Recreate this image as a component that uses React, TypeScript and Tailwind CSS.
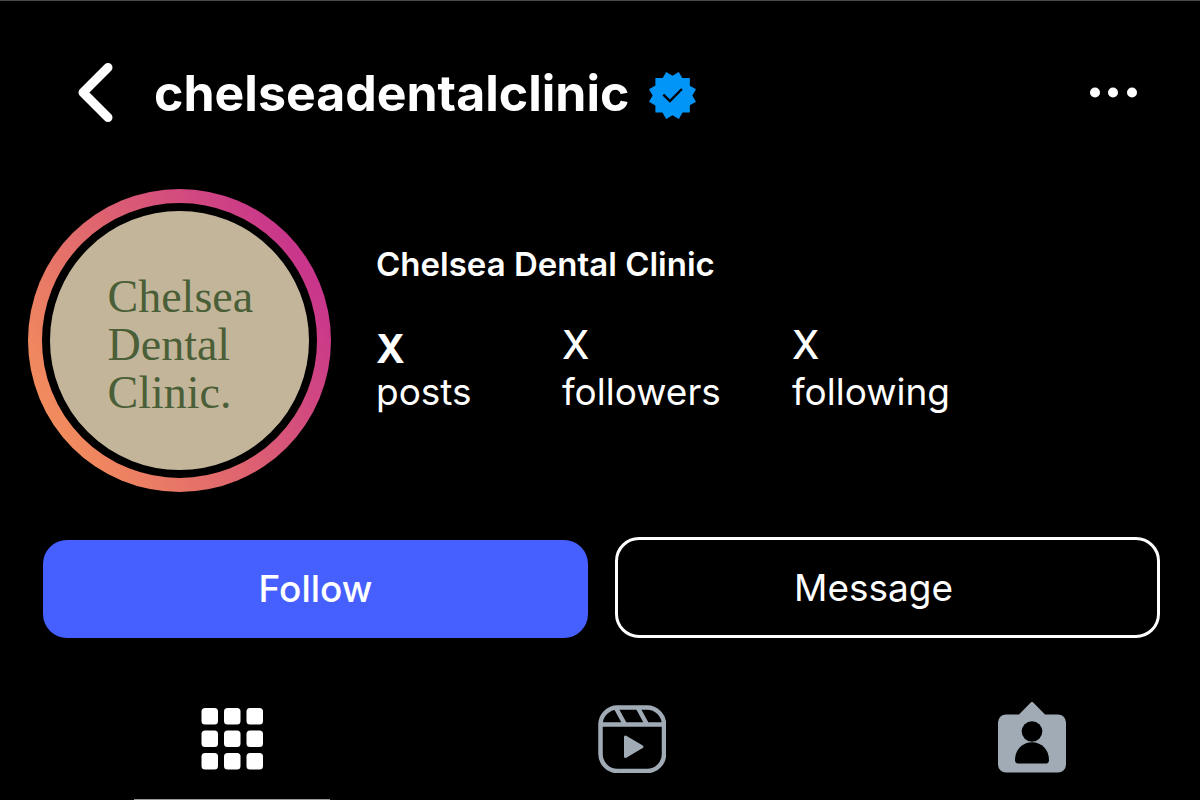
import React, { useState } from 'react';
import clsx from 'clsx';

interface Stat {
  label: string;
  value: string;
  valueClass: string;
}

type Tab = 'posts' | 'reels' | 'tagged';

const stats: Stat[] = [
  { label: 'posts', value: 'X', valueClass: 'font-bold pt-1' },
  { label: 'followers', value: 'X', valueClass: 'font-medium' },
  { label: 'following', value: 'X', valueClass: 'font-medium' },
];

const BackIcon: React.FC = () => (
  <svg viewBox="0 0 36 60" className="h-[60px] w-9" fill="none" stroke="currentColor" strokeWidth="9" strokeLinecap="round" strokeLinejoin="round" aria-hidden="true">
    <path d="M30 4.500 5 29.500l25 25" />
  </svg>
);

const VerifiedIcon: React.FC = () => (
  <svg viewBox="0 0 40 40" className="size-[47px]" role="img" aria-label="Verified">
    <path
      fill="#0095f6"
      d="M19.998 3.094 14.638 0l-2.972 5.15H5.432v6.354L0 14.64 3.094 20 0 25.359l5.432 3.137v5.905h5.975L14.638 40l5.36-3.094L25.358 40l3.232-5.6h6.162v-6.01L40 25.359 36.905 20 40 14.641l-5.248-3.03v-6.46h-6.419L25.358 0l-5.36 3.094Z"
    />
    <path d="m12.2 19.3 5.6 5.4 10.2-10.2" fill="none" stroke="#000" strokeWidth="2" />
  </svg>
);

const MoreIcon: React.FC = () => (
  <svg viewBox="0 0 48 12" className="h-3 w-12" fill="currentColor" aria-hidden="true">
    <circle cx="5" cy="5.5" r="5" />
    <circle cx="23" cy="5.5" r="5" />
    <circle cx="42" cy="5.5" r="5" />
  </svg>
);

const GridIcon: React.FC = () => (
  <svg viewBox="0 0 62 62" className="size-[62px]" fill="currentColor" aria-hidden="true">
    {[0, 22.5, 45].map(y =>
      [0.5, 23, 45.5].map(x => <rect key={`${x}-${y}`} x={x} y={y} width="16.5" height="16.5" rx="3.5" />)
    )}
  </svg>
);

const ReelsIcon: React.FC = () => (
  <svg viewBox="0 0 68 68" className="size-[68px]" fill="none" stroke="currentColor" strokeWidth="4.500" aria-hidden="true">
    <rect x="2.500" y="2.500" width="63.500" height="63.500" rx="17" />
    <path d="M2.500 19.500h63.500M18 3l9 16.500M40 3l9 16.500" />
    <path d="M27.500 32v19.500l16.500-9.750Z" fill="currentColor" strokeWidth="3" strokeLinejoin="round" />
  </svg>
);

const TaggedIcon: React.FC = () => (
  <svg viewBox="0 0 68 72" className="h-[72px] w-[68px]" fill="currentColor" aria-hidden="true">
    <path d="M8 12.500h13L32.500.800a2 2 0 0 1 3 0L47 12.500h13a8 8 0 0 1 8 8v42a8 8 0 0 1-8 8H8a8 8 0 0 1-8-8v-42a8 8 0 0 1 8-8Z" />
    <circle cx="34" cy="29.500" r="10.300" fill="#000" />
    <path d="M34 40.300c-10 0-17 8-17 17.700 0 2 1 3.500 3 3.500h28c2 0 3-1.500 3-3.500 0-9.700-7-17.700-17-17.700Z" fill="#000" />
  </svg>
);

const tabs: Array<{ id: Tab; label: string; icon: React.FC }> = [
  { id: 'posts', label: 'Posts', icon: GridIcon },
  { id: 'reels', label: 'Reels', icon: ReelsIcon },
  { id: 'tagged', label: 'Tagged', icon: TaggedIcon },
];

const App: React.FC = () => {
  const [tab, setTab] = useState<Tab>('posts');

  return (
    <main className="min-h-screen border-t border-[#4a4a4a] bg-black font-['Inter',sans-serif] text-white">
      <header className="flex items-center pt-[61px] pr-[62px] pl-[78px]">
        <button type="button" aria-label="Back">
          <BackIcon />
        </button>
        <h1 className="ml-10 text-[50px] leading-[62px] font-bold">chelseadentalclinic</h1>
        <span className="ml-5 pt-1">
          <VerifiedIcon />
        </span>
        <button type="button" aria-label="More options" className="ml-auto">
          <MoreIcon />
        </button>
      </header>

      <section className="mt-[65px] flex items-start gap-[45px] pr-10 pl-7">
        <div className="size-[303px] shrink-0 rounded-full bg-linear-[60deg,#f5935a_8%,#de6370_48%,#c9368b_85%] p-[14px]">
          <div className="flex size-full items-center justify-center rounded-full border-8 border-black bg-[#c3b59a] pt-2">
            <p className="w-[144px] font-['Liberation_Serif',serif] text-[46px] leading-[48px] whitespace-pre-line text-[#4a5f37]">
              {'Chelsea\nDental\nClinic.'}
            </p>
          </div>
        </div>
        <div className="min-w-0 flex-1 pt-[53px]">
          <h2 className="text-[33px] leading-[44px] font-semibold">Chelsea Dental Clinic</h2>
          <dl className="mt-[35px] grid grid-cols-[186px_230px_1fr]">
            {stats.map(s => (
              <div key={s.label} className="flex flex-col-reverse justify-end">
                <dt className="text-[37px] leading-[46px]">{s.label}</dt>
                <dd className={clsx('h-12 text-[39px] leading-[48px]', s.valueClass)}>{s.value}</dd>
              </div>
            ))}
          </dl>
        </div>
      </section>

      <div className="mt-[45px] grid grid-cols-2 items-end gap-[27px] pr-10 pl-[43px]">
        <button type="button" className="h-[98px] rounded-3xl bg-[#465fff] text-[37px] font-medium">
          Follow
        </button>
        <button type="button" className="h-[101px] rounded-3xl border-3 border-white pr-7 text-[37px]">
          Message
        </button>
      </div>

      <nav className="mt-[61px] grid grid-cols-3">
        {tabs.map(t => (
          <div key={t.id} className="flex justify-center pl-16">
            <button
              type="button"
              aria-label={t.label}
              onClick={() => setTab(t.id)}
              className={clsx(
                'flex h-[101px] w-[196px] items-start justify-center border-b',
                t.id === 'posts' ? 'pt-[9px]' : t.id === 'reels' ? 'pt-[6px]' : 'pt-[3px]',
                tab === t.id ? 'border-[#9a9a9a]' : 'border-transparent',
                t.id === 'posts' ? 'text-white' : 'text-[#a0abb6]'
              )}
            >
              <t.icon />
            </button>
          </div>
        ))}
      </nav>
    </main>
  );
};

export default App;
